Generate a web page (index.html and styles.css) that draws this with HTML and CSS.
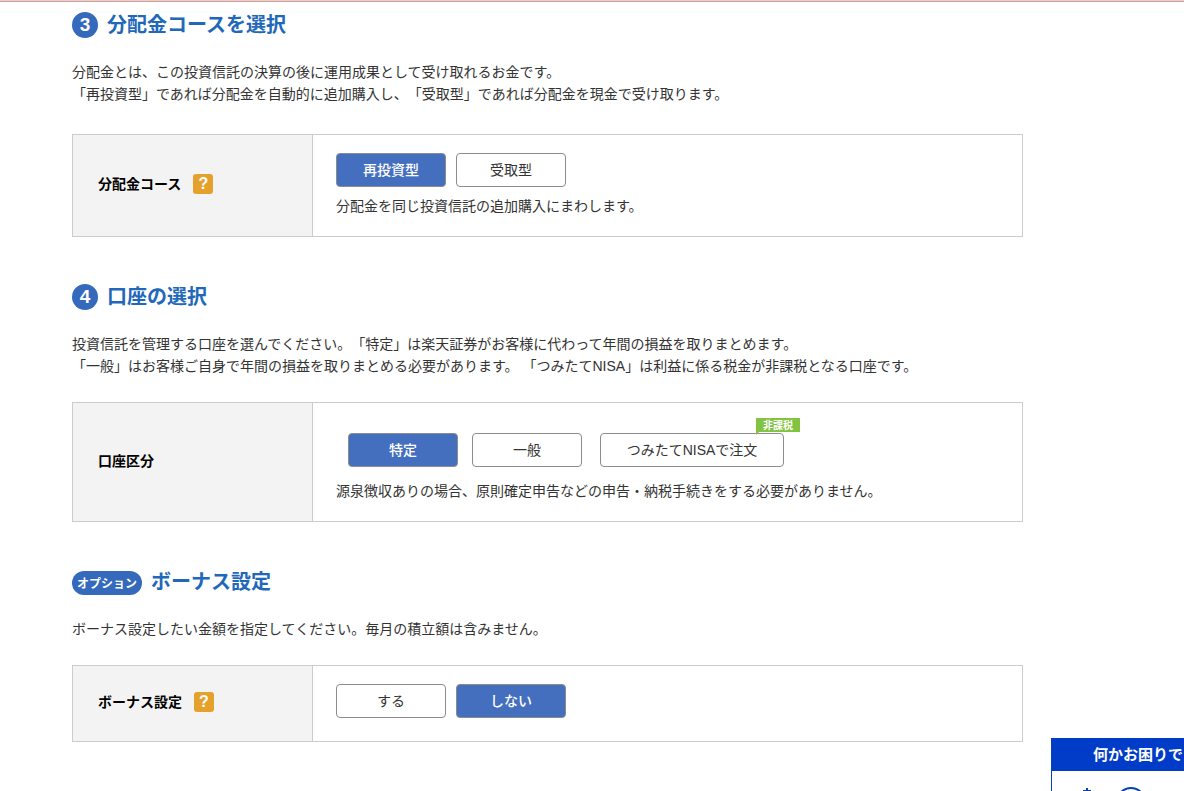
FILE: index.html
```
<!DOCTYPE html>
<html lang="ja">
<head>
  <meta charset="UTF-8">
  <meta name="viewport" content="width=device-width, initial-scale=1">
  <title>積立設定</title>
  <link rel="stylesheet" href="styles.css">
</head>
<body>
  <div class="top-alert"></div>

  <main class="container">
    <section class="step step-course">
      <h2 class="step-title"><span class="step-number">3</span>分配金コースを選択</h2>
      <p class="step-text">分配金とは、この投資信託の決算の後に運用成果として受け取れるお金です。<br>「再投資型」であれば分配金を自動的に追加購入し、「受取型」であれば分配金を現金で受け取ります。</p>
      <div class="setting" role="group" aria-labelledby="course-label">
        <div class="setting-label">
          <span id="course-label">分配金コース</span>
          <button type="button" class="help" aria-label="分配金コースのヘルプ">?</button>
        </div>
        <div class="setting-body">
          <div class="choices">
            <button type="button" class="choice selected" aria-pressed="true">再投資型</button>
            <button type="button" class="choice" aria-pressed="false">受取型</button>
          </div>
          <p class="note">分配金を同じ投資信託の追加購入にまわします。</p>
        </div>
      </div>
    </section>

    <section class="step">
      <h2 class="step-title"><span class="step-number">4</span>口座の選択</h2>
      <p class="step-text">投資信託を管理する口座を選んでください。「特定」は楽天証券がお客様に代わって年間の損益を取りまとめます。<br>「一般」はお客様ご自身で年間の損益を取りまとめる必要があります。 「つみたてNISA」は利益に係る税金が非課税となる口座です。</p>
      <div class="setting" role="group" aria-labelledby="account-label">
        <div class="setting-label">
          <span id="account-label">口座区分</span>
        </div>
        <div class="setting-body account-body">
          <div class="choices account-choices">
            <button type="button" class="choice selected" aria-pressed="true">特定</button>
            <button type="button" class="choice" aria-pressed="false">一般</button>
            <button type="button" class="choice choice-nisa" aria-pressed="false">つみたてNISAで注文<span class="tax-free">非課税</span></button>
          </div>
          <p class="note">源泉徴収ありの場合、原則確定申告などの申告・納税手続きをする必要がありません。</p>
        </div>
      </div>
    </section>

    <section class="step">
      <h2 class="step-title"><span class="step-option">オプション</span>ボーナス設定</h2>
      <p class="step-text">ボーナス設定したい金額を指定してください。毎月の積立額は含みません。</p>
      <div class="setting" role="group" aria-labelledby="bonus-label">
        <div class="setting-label">
          <span id="bonus-label">ボーナス設定</span>
          <button type="button" class="help" aria-label="ボーナス設定のヘルプ">?</button>
        </div>
        <div class="setting-body bonus-body">
          <div class="choices">
            <button type="button" class="choice" aria-pressed="false">する</button>
            <button type="button" class="choice selected" aria-pressed="true">しない</button>
          </div>
        </div>
      </div>
    </section>
  </main>

  <aside class="support">
    <div class="support-title">何かお困りで</div>
    <svg class="support-icon" width="132" height="20" viewBox="0 0 132 20" fill="none" stroke="#0a3fb8" stroke-width="2" aria-hidden="true">
      <path d="M35 17v4M31 20h8"/>
      <circle cx="79" cy="31" r="14"/>
    </svg>
  </aside>
</body>
</html>
```
FILE: styles.css
```
* {
  box-sizing: border-box;
}

body {
  margin: 0;
  background: #fff;
  color: #333;
  font-family: "Liberation Sans", "Noto Sans CJK JP", sans-serif;
  font-size: 14px;
  line-height: 22px;
  text-spacing-trim: space-all;
}

p,
h2 {
  margin: 0;
}

button {
  font-family: inherit;
  cursor: pointer;
}

.top-alert {
  height: 2px;
  background: #f3c9c9;
  border-bottom: 1px solid #c9a5a2;
}

.container {
  max-width: 1095px;
  padding: 10px 72px 0;
}

.step {
  margin-bottom: 47px;
}

.step:last-child {
  margin-bottom: 0;
}

/* headings */
.step-title {
  display: flex;
  align-items: center;
  gap: 9px;
  height: 26px;
  margin-bottom: 23px;
  color: #2268b9;
  font-size: 20px;
  line-height: 26px;
}

.step-number {
  width: 26px;
  height: 26px;
  border-radius: 50%;
  background: #3469bb;
  color: #fff;
  font-size: 19px;
  text-align: center;
}

.step-option {
  align-self: flex-end;
  width: 70px;
  height: 24px;
  border-radius: 12px;
  background: #3469bb;
  color: #fff;
  font-size: 12px;
  line-height: 26px;
  text-align: center;
}

.step-text {
  margin-bottom: 25px;
}

.step-course .step-text {
  margin-bottom: 29px;
}

/* setting rows */
.setting {
  display: flex;
  border: 1px solid #ccc;
}

.setting-label {
  flex: 0 0 240px;
  display: flex;
  align-items: center;
  gap: 12px;
  padding: 0 0 3px 25px;
  border-right: 1px solid #ccc;
  background: #f3f3f3;
  color: #000;
  font-weight: bold;
}

.help {
  width: 20px;
  height: 20px;
  padding: 0;
  border: none;
  border-radius: 3px;
  background: #e5a12c;
  color: #fff;
  font-size: 16px;
  font-weight: bold;
  line-height: 20px;
}

.setting-body {
  flex: 1;
  padding: 18px 23px 19px;
}

.account-body {
  padding-top: 30px;
}

.bonus-body {
  padding-bottom: 23px;
}

.choices {
  display: flex;
  gap: 10px;
}

.account-choices {
  gap: 14px;
  margin-left: 12px;
}

.choice {
  position: relative;
  width: 110px;
  height: 34px;
  padding: 0;
  border: 1px solid #8c8c8c;
  border-radius: 4px;
  background: #fff;
  color: #333;
  font-size: 14px;
  line-height: 32px;
}

.choice.selected {
  background: #446fbe;
  color: #fff;
  font-weight: 500;
}

.choice-nisa {
  width: 184px;
  margin-left: 4px;
}

.tax-free {
  position: absolute;
  top: -16px;
  right: -17px;
  width: 44px;
  height: 14px;
  background: #82c341;
  color: #fff;
  font-size: 10px;
  font-weight: bold;
  line-height: 16px;
}

.tax-free::after {
  content: "";
  position: absolute;
  top: 14px;
  left: 0;
  border-top: 3px solid #82c341;
  border-right: 3px solid transparent;
}

.note {
  margin-top: 8px;
}

.account-body .note {
  margin-top: 13px;
}

/* support box, bottom right */
.support {
  position: fixed;
  right: 0;
  bottom: 0;
  width: 133px;
  border-left: 1px solid #0a3fb8;
  background: #fff;
  overflow: hidden;
}

.support-title {
  padding-left: 41px;
  background: #003cc8;
  color: #fff;
  font-size: 15px;
  font-weight: bold;
  line-height: 33px;
  white-space: nowrap;
}

.support-icon {
  display: block;
}
```
